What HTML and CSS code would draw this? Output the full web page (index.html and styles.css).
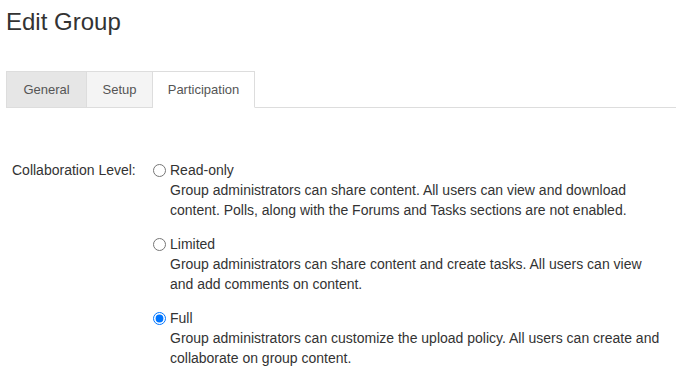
FILE: index.html
```html
<!DOCTYPE html>
<html lang="en">
<head>
  <meta charset="UTF-8" />
  <title>Edit Group</title>
  <link rel="stylesheet" href="styles.css">
</head>
<body>
<h1>Edit Group</h1>

<ul class="tabs">
  <li class="tab tab-general">General</li>
  <li class="tab tab-setup">Setup</li>
  <li class="tab tab-participation active">Participation</li>
</ul>

<div class="form-row">
  <div class="form-label">Collaboration Level:</div>
  <div class="options">
    <div class="option">
      <label class="option-title"><input type="radio" name="level" value="read"> Read-only</label>
      <p class="option-desc">Group administrators can share content. All users can view and download content. Polls, along with the Forums and Tasks sections are not enabled.</p>
    </div>
    <div class="option">
      <label class="option-title"><input type="radio" name="level" value="limited"> Limited</label>
      <p class="option-desc">Group administrators can share content and create tasks. All users can view and add comments on content.</p>
    </div>
    <div class="option">
      <label class="option-title"><input type="radio" name="level" value="full" checked> Full</label>
      <p class="option-desc">Group administrators can customize the upload policy. All users can create and collaborate on group content.</p>
    </div>
  </div>
</div>
</body>
</html>
```

FILE: styles.css
```css
* {
  margin: 0;
  padding: 0;
  box-sizing: border-box;
}

body {
  font-family: 'Liberation Sans', Arial, sans-serif;
  font-size: 14px;
  line-height: 20px;
  color: #333;
  background-color: #fff;
  padding: 0 0 0 6px;
}

h1 {
  font-size: 24px;
  font-weight: normal;
  line-height: 28px;
  padding-top: 8px;
  margin-bottom: 35px;
}

.tabs {
  display: flex;
  list-style: none;
  border-bottom: 1px solid #ddd;
  height: 37px;
}

.tab {
  font-size: 13px;
  line-height: 35px;
  color: #555;
  text-align: center;
  border: 1px solid #ddd;
  margin-bottom: -1px;
  height: 37px;
}

.tab + .tab {
  border-left: none;
}

.tab-general {
  width: 81px;
  background-color: #e6e6e6;
}

.tab-setup {
  width: 66px;
  background-color: #f4f4f4;
}

.tab-participation {
  width: 102px;
}

.tab.active {
  background-color: #fff;
  border-bottom-color: #fff;
}

.form-row {
  display: flex;
  margin-top: 52px;
}

.form-label {
  width: 147px;
  padding-left: 6px;
}

.options {
  width: 512px;
}

.option {
  margin-bottom: 14px;
}

.option-title {
  display: flex;
  align-items: center;
  gap: 4px;
}

.option-title input {
  margin: 0;
  width: 13px;
  height: 13px;
}

.option-desc {
  padding-left: 17px;
}
```
